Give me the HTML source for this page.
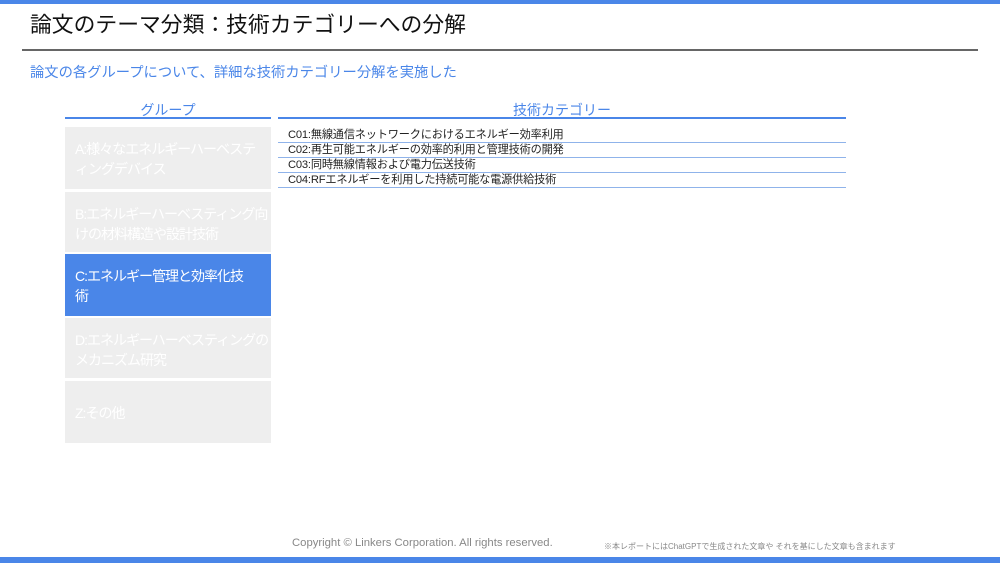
<!DOCTYPE html>
<html><head><meta charset="utf-8"><style>
body{margin:0;width:1000px;height:563px;position:relative;background:#fff;font-family:"Liberation Sans","Noto Sans CJK JP",sans-serif;overflow:hidden}
.a{position:absolute}
.box{position:absolute;left:65px;width:206px;background:#eeeeee;color:#fff;font-size:14px;line-height:20px;padding:12px 0 0 10px;box-sizing:border-box;letter-spacing:-1px;white-space:nowrap;overflow:hidden}
.row{position:absolute;left:288px;font-size:11.2px;color:#222;line-height:14px;white-space:nowrap;letter-spacing:-0.2px}
.ln{position:absolute;left:278px;width:568px;height:1px;background:#8fb3ea}
</style></head><body>
<div class="a" style="left:0;top:0;width:1000px;height:4px;background:#4a86e8"></div>
<div class="a" style="left:30px;top:8px;font-size:21.8px;color:#111">論文のテーマ分類：技術カテゴリーへの分解</div>
<div class="a" style="left:22px;top:49px;width:956px;height:2px;background:#666"></div>
<div class="a" style="left:30px;top:61px;font-size:14.3px;color:#4a86e8">論文の各グループについて、詳細な技術カテゴリー分解を実施した</div>
<div class="a" style="left:65px;top:100px;width:206px;text-align:center;font-size:14px;color:#4a86e8">グループ</div>
<div class="a" style="left:65px;top:117px;width:206px;height:2px;background:#4a86e8"></div>
<div class="a" style="left:278px;top:100px;width:568px;text-align:center;font-size:14px;color:#4a86e8">技術カテゴリー</div>
<div class="a" style="left:278px;top:117px;width:568px;height:2px;background:#4a86e8"></div>
<div class="box" style="top:127px;height:62px">A:様々なエネルギーハーベステ<br>ィングデバイス</div>
<div class="box" style="top:192px;height:60px">B:エネルギーハーベスティング向<br>けの材料構造や設計技術</div>
<div class="box" style="top:254px;height:62px;background:#4a86e8">C:エネルギー管理と効率化技<br>術</div>
<div class="box" style="top:318px;height:60px">D:エネルギーハーベスティングの<br>メカニズム研究</div>
<div class="box" style="top:381px;height:62px;padding-top:22px">Z:その他</div>
<div class="row" style="top:128px">C01:無線通信ネットワークにおけるエネルギー効率利用</div>
<div class="ln" style="top:142px"></div>
<div class="row" style="top:143px">C02:再生可能エネルギーの効率的利用と管理技術の開発</div>
<div class="ln" style="top:157px"></div>
<div class="row" style="top:158px">C03:同時無線情報および電力伝送技術</div>
<div class="ln" style="top:172px"></div>
<div class="row" style="top:173px">C04:RFエネルギーを利用した持続可能な電源供給技術</div>
<div class="ln" style="top:187px"></div>
<div class="a" style="left:292px;top:537px;font-size:11.3px;color:#888">Copyright © Linkers Corporation. All rights reserved.</div>
<div class="a" style="left:604px;top:541px;font-size:8px;color:#888">※本レポートにはChatGPTで生成された文章や それを基にした文章も含まれます</div>
<div class="a" style="left:0;top:557px;width:1000px;height:6px;background:#4a86e8"></div>
</body></html>
